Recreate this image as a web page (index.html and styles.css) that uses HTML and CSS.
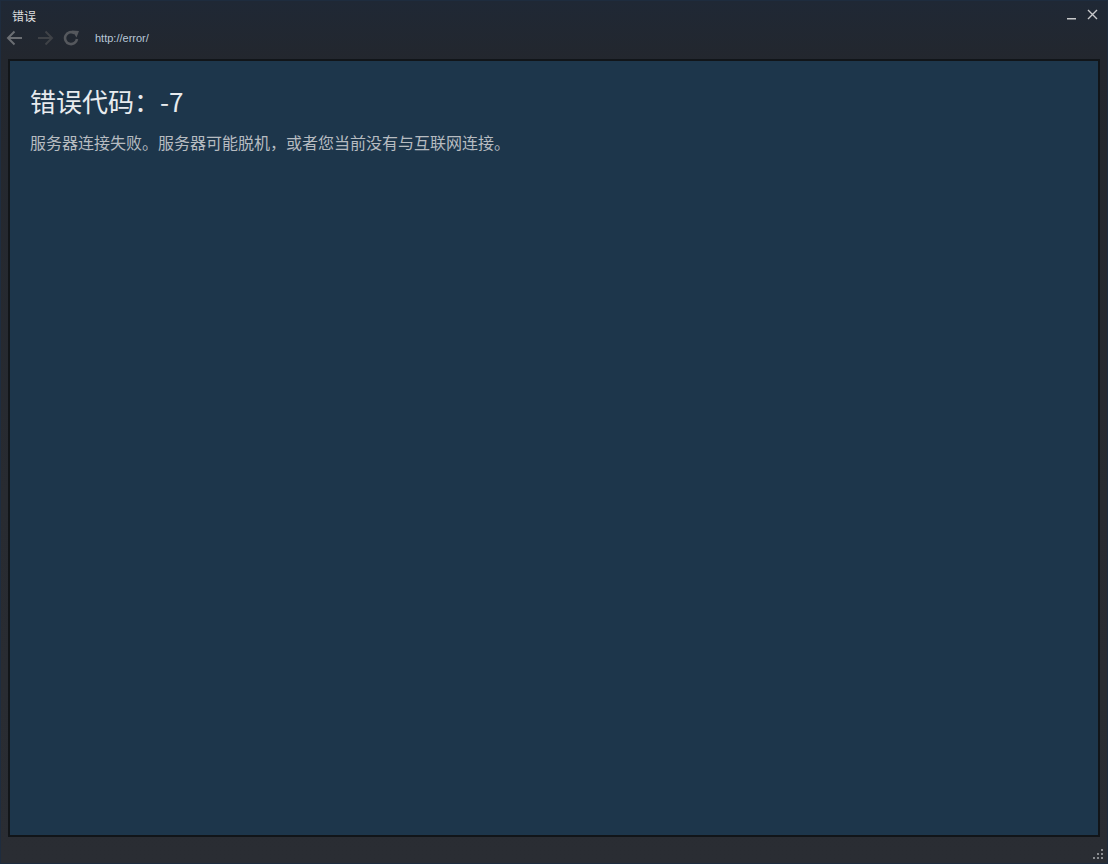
FILE: index.html
```html
<!DOCTYPE html>
<html lang="zh-CN">
<head>
<meta charset="utf-8">
<title>错误</title>
<link rel="stylesheet" href="styles.css">
</head>
<body>
<div class="window">
  <div class="titlebar">
    <span class="title">错误</span>
    <div class="winbtns">
      <svg class="min" width="10" height="10" viewBox="0 0 10 10"><rect x="0" y="8" width="9" height="1.5" fill="#c8c9cb"/></svg>
      <svg class="close" width="11" height="11" viewBox="0 0 11 11"><path d="M1 1 L10 10 M10 1 L1 10" stroke="#c8c9cb" stroke-width="1.4"/></svg>
    </div>
  </div>
  <div class="navbar">
    <svg class="nav back" width="18" height="16" viewBox="0 0 18 16"><path d="M2 8 H16 M8.5 1.5 L2 8 L8.5 14.5" fill="none" stroke="#6b6e73" stroke-width="2"/></svg>
    <svg class="nav fwd" width="18" height="16" viewBox="0 0 18 16"><path d="M2 8 H16 M9.5 1.5 L16 8 L9.5 14.5" fill="none" stroke="#3f4247" stroke-width="2"/></svg>
    <svg class="nav reload" width="18" height="16" viewBox="0 0 18 16"><path d="M14 9 A6 6 0 1 1 11.5 3.2" fill="none" stroke="#55585d" stroke-width="2.6"/><path d="M9 0.5 L16 1 L13.5 7.5 Z" fill="#55585d"/></svg>
    <span class="url">http://error/</span>
  </div>
  <div class="content">
    <h1 class="heading">错误代码：-7</h1>
    <p class="message">服务器连接失败。服务器可能脱机，或者您当前没有与互联网连接。</p>
  </div>
  <div class="footer">
    <svg class="grip" width="12" height="12" viewBox="0 0 12 12">
      <rect x="9" y="1" width="2" height="2" fill="#8a8c90"/>
      <rect x="5" y="5" width="2" height="2" fill="#8a8c90"/>
      <rect x="9" y="5" width="2" height="2" fill="#8a8c90"/>
      <rect x="1" y="9" width="2" height="2" fill="#8a8c90"/>
      <rect x="5" y="9" width="2" height="2" fill="#8a8c90"/>
      <rect x="9" y="9" width="2" height="2" fill="#8a8c90"/>
    </svg>
  </div>
</div>
</body>
</html>
```
FILE: styles.css
```css
html, body {
  margin: 0;
  padding: 0;
  height: 100%;
}
body {
  background: #25282e;
  font-family: Arial, "Liberation Sans", "Noto Sans CJK SC", sans-serif;
}
.window {
  box-sizing: border-box;
  width: 1108px;
  height: 864px;
  border: 1px solid #1e2c3e;
  background: linear-gradient(180deg, #1f2835 0px, #23272e 60px, #282b31 500px, #2a2d33 100%);
  display: flex;
  flex-direction: column;
}
.titlebar {
  height: 25px;
  display: flex;
  align-items: center;
  justify-content: space-between;
  padding: 0 9px 0 11px;
}
.title {
  font-size: 12px;
  color: #dcdedf;
  font-family: "Noto Sans CJK SC", sans-serif;
  margin-top: 4px;
}
.winbtns {
  display: flex;
  align-items: center;
  gap: 10px;
  margin-top: 2px;
}
.navbar {
  height: 24px;
  display: flex;
  align-items: center;
  padding-left: 5px;
}
.nav {
  display: block;
}
.back { margin-right: 12px; }
.fwd { margin-right: 9px; }
.reload { margin-right: 14px; }
.url {
  font-family: "Liberation Sans", Arial, sans-serif;
  font-size: 11px;
  color: #b9c7d8;
}
.content {
  margin: 9px 7px 0 7px;
  height: 778px;
  box-sizing: border-box;
  border: 2px solid #111519;
  background: #1d364b;
  padding: 22px 20px;
}
.heading {
  margin: 0;
  font-family: "Noto Sans CJK SC", sans-serif;
  font-weight: normal;
  font-size: 26px;
  line-height: 36px;
  color: #e8ebee;
}
.message {
  margin: 12px 0 0 0;
  font-family: "Noto Sans CJK SC", sans-serif;
  font-size: 16px;
  line-height: 22px;
  color: #b7bcc1;
}
.footer {
  flex: 1;
  display: flex;
  justify-content: flex-end;
  align-items: flex-end;
  padding: 0 3px 3px 0;
}
.grip { display: block; }
```
